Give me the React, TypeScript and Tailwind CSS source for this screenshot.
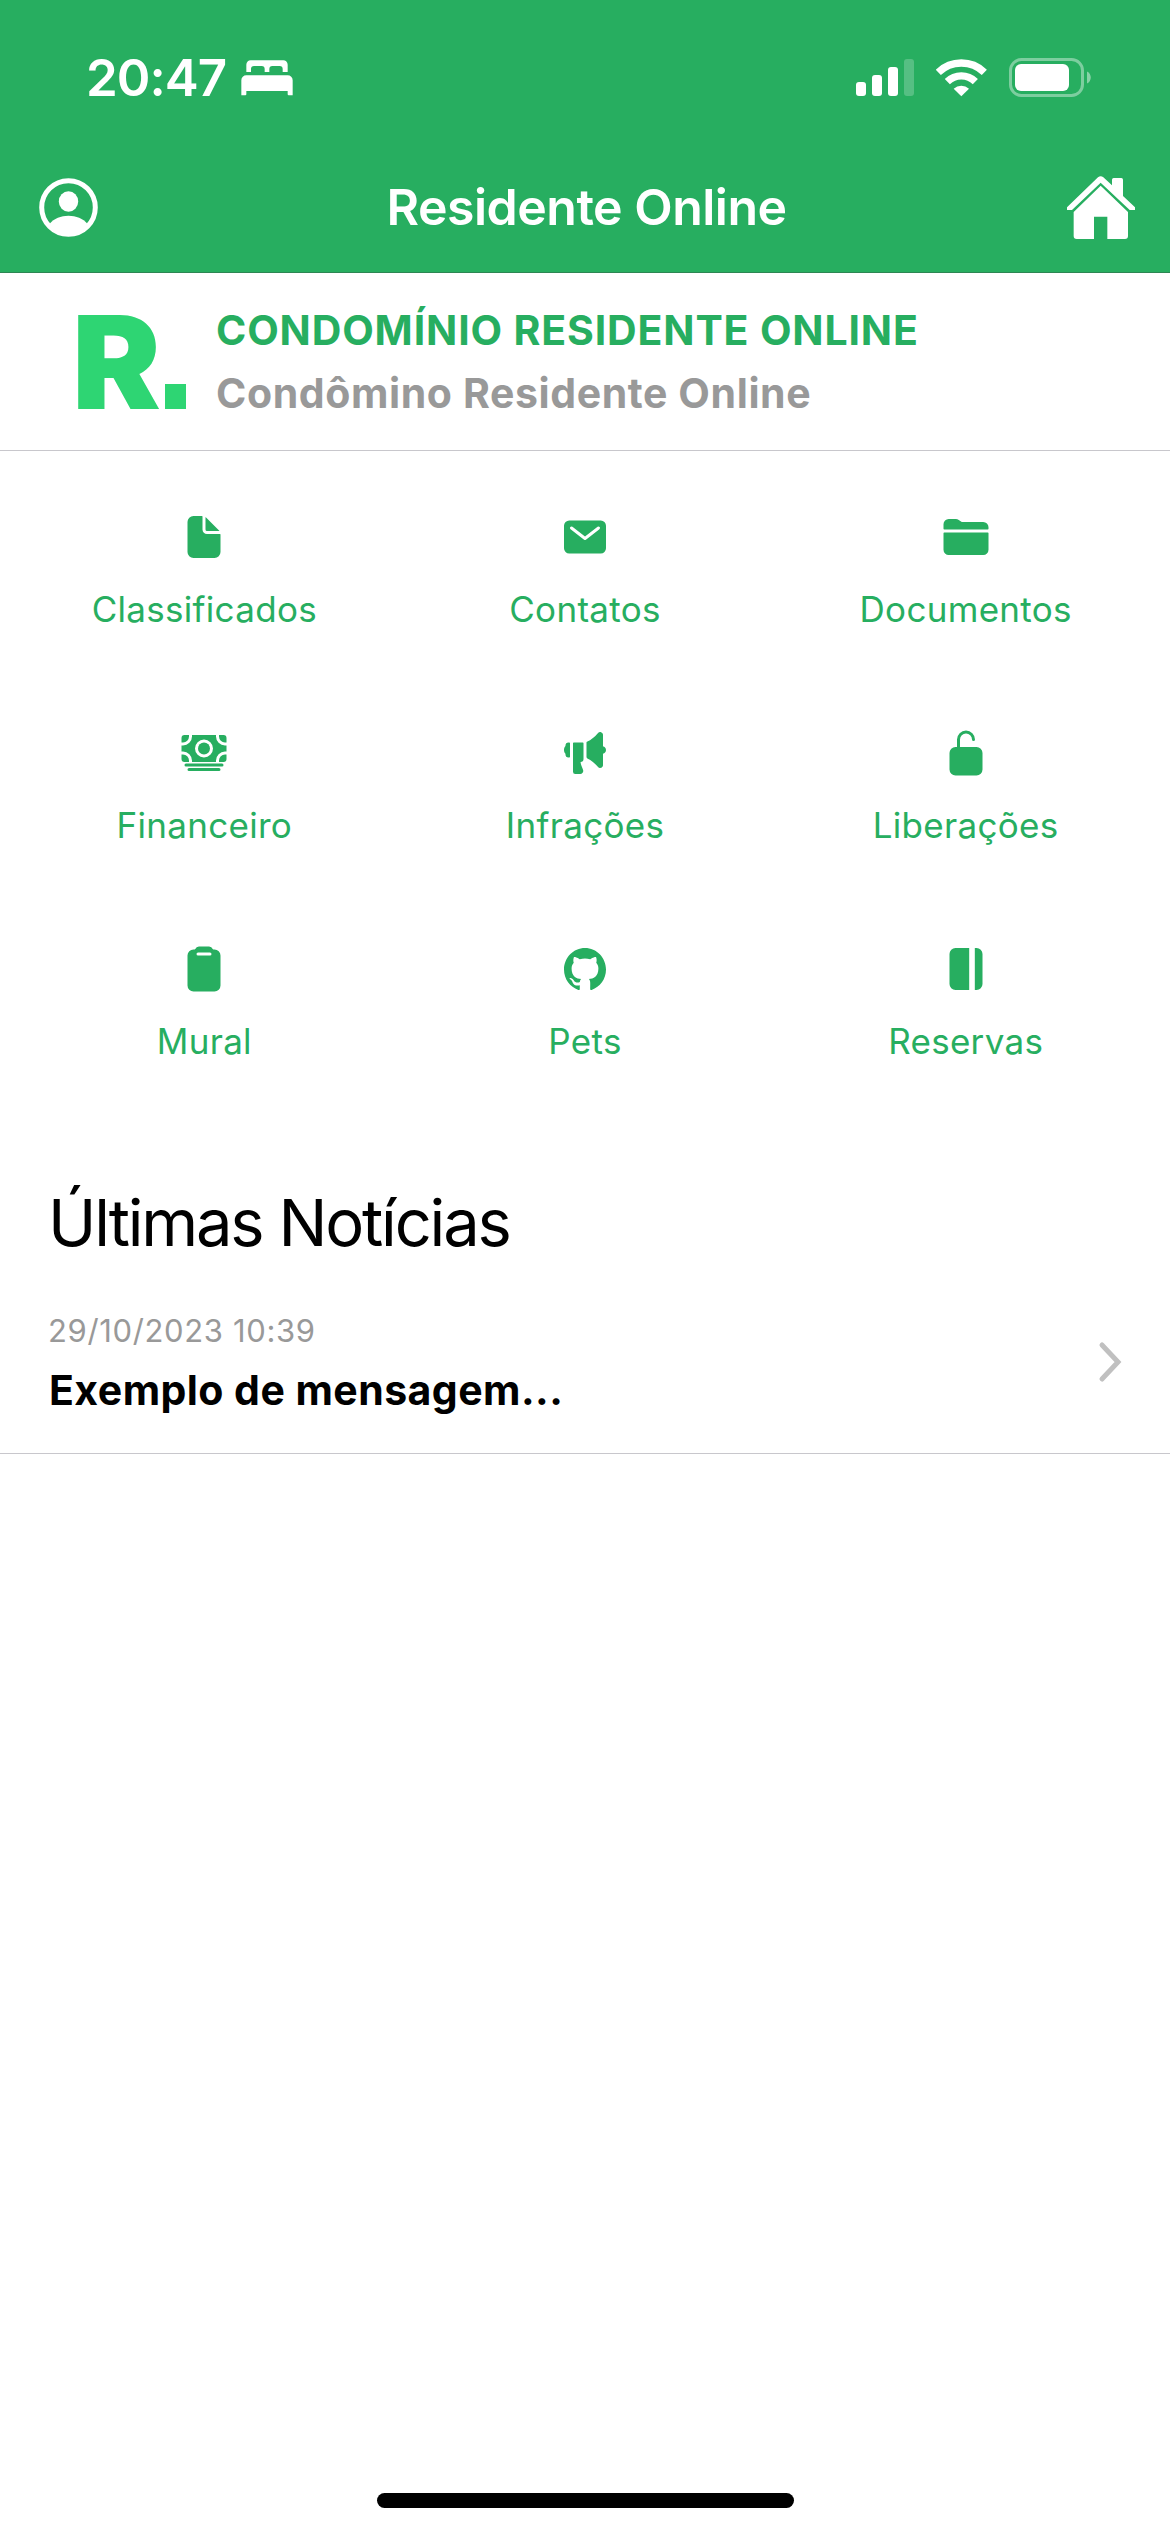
import React from "react";
import type { IconType } from "react-icons";
import {
  IoCash,
  IoClipboard,
  IoDocument,
  IoFolder,
  IoJournal,
  IoLockOpen,
  IoLogoGithub,
  IoMail,
  IoMegaphone,
} from "react-icons/io5";

interface MenuItem {
  label: string;
  icon: IconType;
}

const menuItems: MenuItem[] = [
  { label: "Classificados", icon: IoDocument },
  { label: "Contatos", icon: IoMail },
  { label: "Documentos", icon: IoFolder },
  { label: "Financeiro", icon: IoCash },
  { label: "Infrações", icon: IoMegaphone },
  { label: "Liberações", icon: IoLockOpen },
  { label: "Mural", icon: IoClipboard },
  { label: "Pets", icon: IoLogoGithub },
  { label: "Reservas", icon: IoJournal },
];

const news = [{ date: "29/10/2023 10:39", title: "Exemplo de mensagem..." }];

function BedIcon() {
  return (
    <svg width="52" height="36" viewBox="722 92 156 108" fill="white">
      <path d="M738 128V106a13 13 0 0 1 13-13h98a13 13 0 0 1 13 13v22h-15v-9a9 9 0 0 0-9-9h-22a9 9 0 0 0-9 9v9h-14v-9a9 9 0 0 0-9-9h-23a9 9 0 0 0-9 9v9z" />
      <path d="M723 198v-45a15 15 0 0 1 15-15h124a15 15 0 0 1 15 15v45h-12a3 3 0 0 1-3-3v-10H738v10a3 3 0 0 1-3 3z" />
    </svg>
  );
}

function SignalIcon() {
  return (
    <svg width="58" height="37" viewBox="0 0 58 37" fill="white">
      <rect x="0" y="23" width="10" height="14" rx="3" />
      <rect x="16" y="16" width="10" height="21" rx="3" />
      <rect x="32" y="8" width="10" height="29" rx="3" />
      <rect x="48" y="0" width="10" height="37" rx="3" opacity="0.22" />
    </svg>
  );
}

function WifiIcon() {
  return (
    <svg width="51" height="38" viewBox="498 86 153 114" fill="none" stroke="white">
      <path d="M505 126A99 99 0 0 1 643 126" strokeWidth="22" />
      <path d="M532 154A60 60 0 0 1 616 154" strokeWidth="22" />
      <path d="M574 198L551 175A34 34 0 0 1 597 175Z" fill="white" stroke="none" />
    </svg>
  );
}

function BatteryIcon() {
  return (
    <svg width="82" height="39" viewBox="0 0 82 39" fill="none">
      <rect x="1.5" y="1.5" width="72" height="36" rx="11" stroke="white" strokeWidth="3" opacity="0.4" />
      <rect x="6" y="6" width="54" height="27" rx="6" fill="white" />
      <path d="M78 13.5c5 2 5 10 0 12z" fill="white" opacity="0.45" />
    </svg>
  );
}

function ProfileIcon() {
  return (
    <svg width="59" height="59" viewBox="0 0 59 59">
      <circle cx="29.5" cy="29.5" r="26.8" fill="none" stroke="white" strokeWidth="5" />
      <ellipse cx="29.5" cy="23.5" rx="9.7" ry="10.2" fill="white" />
      <path d="M10.500 46C15 40.500 22 37.800 29.500 37.800S44 40.500 48.500 46C44 53 37 57 29.500 57S15 53 10.500 46z" fill="white" />
    </svg>
  );
}

function HomeIcon() {
  return (
    <svg width="68" height="63" viewBox="891 435 204 189" fill="white">
      <path d="M891 529L984 439q8-7 16 0L1026 463V446q0-5 5-5h23q5 0 5 5V495L1095 529V537H1079L992 455L906 537H891z" />
      <path d="M992 464L1074 543V615q0 9-9 9H1012V557H972V624H920q-9 0-9-9V543z" />
    </svg>
  );
}

function Header() {
  return (
    <header className="h-[273px] border-b border-[#2d8653] bg-[#27ae60] text-white">
      <div className="flex h-[155px] items-center justify-between pl-[86px] pr-[79px]">
        <div className="flex items-center gap-[15px]">
          <span className="pt-px text-[51px] font-semibold tracking-[-1px]">20:47</span>
          <BedIcon />
        </div>
        <div className="flex items-center">
          <SignalIcon />
          <div className="ml-[22px]">
            <WifiIcon />
          </div>
          <div className="ml-[22px]">
            <BatteryIcon />
          </div>
        </div>
      </div>
      <nav className="flex h-[104px] items-center justify-between pl-[39px] pr-[35px]">
        <button className="flex w-[67px]">
          <ProfileIcon />
        </button>
        <h1 className="text-[50px] font-semibold tracking-[-0.5px]">Residente Online</h1>
        <button>
          <HomeIcon />
        </button>
      </nav>
    </header>
  );
}

function Logo() {
  return (
    <div className="flex h-[94px] w-[108px] items-end justify-between text-[#2ed573]">
      <span className="-ml-[6px] w-[80px] origin-left scale-x-[1.03] text-[129px] leading-[94px] font-black">R</span>
      <span className="h-[25px] w-[21px] bg-[#2ed573]" />
    </div>
  );
}

export default function App() {
  return (
    <div className="flex h-[2532px] w-[1170px] flex-col bg-white font-['Inter',sans-serif] text-black">
      <Header />

      <section className="flex h-[178px] border-b border-[#c8c7cc] pl-[78px]">
        <div className="pt-[42px]">
          <Logo />
        </div>
        <div className="ml-[30px] pt-[26px] text-[41px] leading-[63px] font-bold whitespace-nowrap">
          <p className="tracking-[0.85px] text-[#27ae60]">CONDOMÍNIO RESIDENTE ONLINE</p>
          <p className="tracking-[0.6px] text-[#999999]">Condômino Residente Online</p>
        </div>
      </section>

      <section className="grid grid-cols-3 px-3.5 pt-[62px]">
        {menuItems.map(({ label, icon: Icon }) => (
          <button key={label} className="flex h-[216px] flex-col items-center gap-6 text-[#27ae60]">
            <Icon size={48} />
            <span className="text-[35px] leading-[48px] tracking-[0.3px]">{label}</span>
          </button>
        ))}
      </section>

      <h2 className="mt-[22px] pl-[48px] text-[65px] leading-[80px] tracking-[-2.2px]">Últimas Notícias</h2>

      {news.map((item) => (
        <article
          key={item.date}
          className="flex items-center justify-between border-b border-[#c8c7cc] pt-12 pr-[48px] pb-[38px] pl-[48px]">
          <div>
            <p className="text-[31px] leading-[40px] tracking-[0.65px] text-[#999999]">{item.date}</p>
            <p className="mt-[14px] pl-px text-[41px] leading-[50px] font-bold tracking-[0.45px]">{item.title}</p>
          </div>
          <svg className="mb-[3px]" width="24" height="42" viewBox="0 0 24 42" fill="none">
            <path d="M4 4L20 21L4 38" stroke="#c0c0c0" strokeWidth="5" strokeLinecap="round" />
          </svg>
        </article>
      ))}

      <div className="mx-auto mt-auto mb-[24px] h-[15px] w-[417px] rounded-full bg-black" />
    </div>
  );
}
